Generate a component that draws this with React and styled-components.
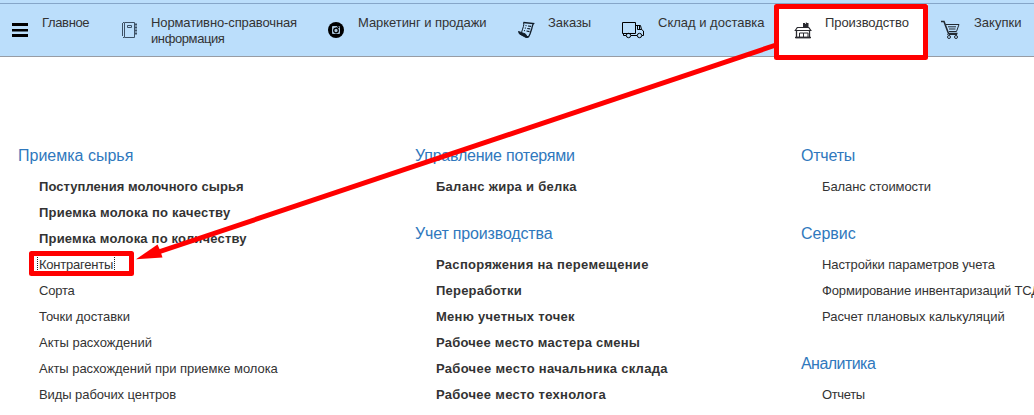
import React from "react";
import styled, { createGlobalStyle } from "styled-components";

const Global = createGlobalStyle`
  * { box-sizing: border-box; }
  body { margin: 0; background: #fff; overflow: hidden; }
`;
const Page = styled.div`
  position: relative;
  width: 1034px;
  height: 415px;
  overflow: hidden;
  font: 13px/16px "Liberation Sans", Arial, sans-serif;
  color: #333;
`;
const TopStrip = styled.div`
  height: 4px;
  background: #bbdefb;
  border-bottom: 1px solid #86a6c8;
`;
const Nav = styled.nav`
  display: flex;
  height: 53px;
  background: #bbdefb;
  border-bottom: 1px solid #979ca4;
`;
const NavItem = styled.a`
  display: flex;
  flex: 0 0 ${(p) => p.$w}px;
  padding-top: 11px;
  background: ${(p) => (p.$active ? "#fff" : "transparent")};
`;
const IconSlot = styled.span`
  flex: 0 0 ${(p) => p.$w}px;
  padding: 5px 0 0 ${(p) => p.$left}px;
  svg { display: block; overflow: visible; }
`;
const Label = styled.span`
  display: flex;
  flex-direction: column;
  white-space: nowrap;
`;
const Line = styled.span`
  letter-spacing: ${(p) => p.$ls || 0}px;
`;
const Columns = styled.main`
  display: grid;
  grid-template-columns: 397px 386px 300px;
  padding: 89px 0 0 18px;
`;
const Section = styled.section`
  margin-bottom: 24px;
`;
const Heading = styled.h2`
  margin: 0 0 8px;
  font-size: 16px;
  line-height: 20px;
  font-weight: 400;
  color: #2f78bd;
  white-space: nowrap;
  letter-spacing: ${(p) => p.$ls || 0}px;
`;
const Entry = styled.a`
  display: block;
  height: 26px;
  padding-left: 21px;
  line-height: 26px;
  white-space: nowrap;
  font-weight: ${(p) => (p.$bold ? 700 : 400)};
  letter-spacing: ${(p) => p.$ls || 0}px;
`;
const Focus = styled.span`
  display: inline-block;
  height: 15px;
  line-height: 15px;
  margin-left: -2px;
  padding: 0 1px;
  border: dotted #222;
  border-width: 0 1px;
`;
const Overlay = styled.svg`
  position: absolute;
  inset: 0;
  pointer-events: none;
`;

const MenuIcon = () => (
  <svg width="16" height="16" fill="#000">
    <path d="M0 3h16v3H0zM0 9h16v2.500H0zM0 14h16v3H0z" />
  </svg>
);
const BookIcon = () => (
  <svg width="16" height="17" fill="none" stroke="#3d5165">
    <path d="M2.500 2.500v15h10v-15z" />
    <path d="M.5 3v13M1 2.500h1M1 17.500h1" />
    <path d="M5.500 5.500h4v2h-4z" />
    <path d="M13 4.500h2M13 7.500h2M13 10.500h2M13 13.500h2" strokeWidth="2" />
  </svg>
);
const CameraIcon = () => (
  <svg width="16" height="17">
    <circle cx="8" cy="10" r="8" />
    <rect x="4" y="6" width="8" height="8" rx="1" fill="#aac4d9" />
    <circle cx="8" cy="10.500" r="2.300" fill="#aac4d9" stroke="#000" strokeWidth="1.300" />
    <path d="M8.500 7.500l2-1.500" stroke="#000" />
    <rect x="9.800" y="6.500" width="1.500" height="1.500" />
  </svg>
);
const ScrollIcon = () => (
  <svg width="17" height="17" fill="none" stroke="#101c28">
    <path d="M5.500 2.500l10 1c-1 1-1.200 3-1.700 5L12 14l-1.500 3-8-3" strokeWidth="1.300" />
    <path d="M5.500 2.500c1 2-.5 5-2 10" />
    <path d="M.5 11.500l7 2.500 1 2 1.500 1.300-2 .2L1.500 14z" fill="#101c28" />
    <path d="M7.500 5.500l1 .2M10 6l3 .3M6.800 8l1 .2M9.200 8.500l3 .4M6 10.500l1 .3M8.500 11l3 .6" strokeWidth="1.200" />
  </svg>
);
const TruckIcon = () => (
  <svg width="22" height="17" fill="none" stroke="#000">
    <path d="M4 15.500H1.500v-2M.5 13.500v-11h13v11zM14 5.500h4.500l1 4 2 1.500v4.500H20M9 15.500h6" />
    <path d="M15.500 6v3.500h4M17.500 6v3" />
    <circle cx="6.500" cy="15.500" r="2.200" />
    <circle cx="17.500" cy="15.500" r="2.200" />
  </svg>
);
const FactoryIcon = () => (
  <svg width="17" height="17" fill="none" stroke="#2b2b30">
    <path d="M1.500 9.500v8h13v-8" strokeWidth="1.300" />
    <path d="M.3 10.500l2-3h11.500l2 3z" fill="#fff" strokeWidth="1.200" />
    <path d="M4.500 17v-4h4v4M8.500 13h4.500v4" />
    <path d="M0 17.500h16" strokeWidth="1.400" />
    <path d="M8 7.500V3h2v1h.8V2.500h1v.5h1.700v4.500z" fill="#2b2b30" stroke="none" />
  </svg>
);
const CartIcon = () => (
  <svg width="20" height="18" fill="none" stroke="#222a32">
    <path d="M1 1.500h3l4.500 12h9" strokeWidth="1.600" />
    <path d="M6 4.500h13l-2.500 7H9M8 6.800h8M9 9h6.500" />
    <circle cx="9" cy="17" r="1.500" />
    <circle cx="16" cy="17" r="1.500" />
    <path d="M8.500 13.500l-1 1.500M9 14.500h8" />
  </svg>
);

const nav = [
  { lines: [["Главное", -0.35]], w: 109, l: 12, I: MenuIcon },
  { lines: [["Нормативно-справочная", -0.12], ["информация", -0.4]], w: 207, l: 13, I: BookIcon },
  { lines: [["Маркетинг и продажи", -0.06]], w: 190, l: 12, I: CameraIcon },
  { lines: [["Заказы", -0.06]], w: 110, l: 12, I: ScrollIcon },
  { lines: [["Склад и доставка", 0]], w: 163, l: 6, I: TruckIcon },
  { lines: [["Производство", -0.08]], w: 149, l: 16, s: 46, I: FactoryIcon, active: true },
  { lines: [["Закупки", 0]], w: 106, l: 12, s: 46, I: CartIcon },
];

// Entries are [text, bold, letter spacing, focused].
const cols = [
  [
    { h: "Приемка сырья", items: [
      ["Поступления молочного сырья", true, 0.05],
      ["Приемка молока по качеству", true, 0.22],
      ["Приемка молока по количеству", true, 0.19],
      ["Контрагенты", false, -0.22, true],
      ["Сорта", false, -0.2],
      ["Точки доставки", false, -0.03],
      ["Акты расхождений"],
      ["Акты расхождений при приемке молока", false, -0.04],
      ["Виды рабочих центров", false, -0.07],
    ] },
  ],
  [
    { h: "Управление потерями", ls: -0.22, items: [["Баланс жира и белка", true, 0.27]] },
    { h: "Учет производства", ls: -0.16, items: [
      ["Распоряжения на перемещение", true, 0.31],
      ["Переработки", true, 0.22],
      ["Меню учетных точек", true, 0.28],
      ["Рабочее место мастера смены", true, 0.23],
      ["Рабочее место начальника склада", true, 0.3],
      ["Рабочее место технолога", true, 0.28],
    ] },
  ],
  [
    { h: "Отчеты", ls: -0.2, items: [["Баланс стоимости", false, -0.1]] },
    { h: "Сервис", items: [
      ["Настройки параметров учета", false, -0.12],
      ["Формирование инвентаризаций ТСД", false, -0.13],
      ["Расчет плановых калькуляций", false, -0.04],
    ] },
    { h: "Аналитика", ls: -0.55, items: [["Отчеты", false, -0.35]] },
  ],
];

export default function App() {
  return (
    <Page>
      <Global />
      <TopStrip />
      <Nav>
        {nav.map(({ lines, w, l, s = 42, I, active }) => (
          <NavItem key={lines[0][0]} $w={w} $active={active}>
            <IconSlot $w={s} $left={l}><I /></IconSlot>
            <Label>
              {lines.map(([t, ls]) => <Line key={t} $ls={ls}>{t}</Line>)}
            </Label>
          </NavItem>
        ))}
      </Nav>
      <Columns>
        {cols.map((sections, i) => (
          <div key={i}>
            {sections.map((s) => (
              <Section key={s.h}>
                <Heading $ls={s.ls}>{s.h}</Heading>
                {s.items.map(([t, bold, ls, focus]) => (
                  <Entry key={t} $bold={bold} $ls={ls}>{focus ? <Focus>{t}</Focus> : t}</Entry>
                ))}
              </Section>
            ))}
          </div>
        ))}
      </Columns>
      <Overlay width="1034" height="415" fill="none" stroke="#f00" strokeWidth="5">
        <rect x="776.500" y="6.500" width="149" height="51" strokeLinejoin="round" />
        <rect x="31.500" y="253.500" width="100" height="20" strokeLinejoin="round" />
        <path d="M776 45L157 252.500" />
        <path d="M136 259.300L157.500 244.500l2.500 5.500 2.500 7.500z" fill="#f00" stroke="none" />
      </Overlay>
    </Page>
  );
}
